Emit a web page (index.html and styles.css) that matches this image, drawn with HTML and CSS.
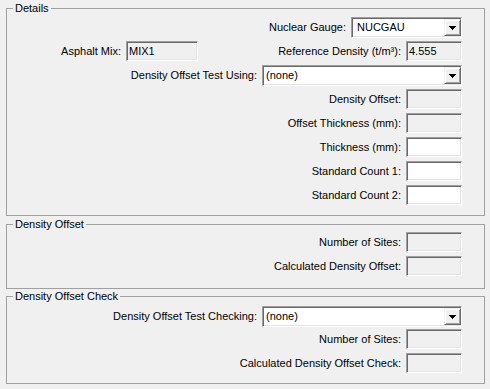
FILE: index.html
```html
<!DOCTYPE html>
<html>
<head>
<meta charset="utf-8">
<link rel="stylesheet" href="styles.css">
</head>
<body>
<fieldset class="group group-details">
  <legend>Details</legend>
  <div class="rows">
    <div class="row">
      <span class="lbl lbl-combo">Nuclear Gauge:</span>
      <div class="combo combo-gauge"><span class="combo-text text-gauge">NUCGAU</span><span class="combo-btn"><svg width="7" height="4" viewBox="0 0 7 4" shape-rendering="crispEdges"><path d="M0 0h7v1h-1v1h-1v1h-1v1h-1v-1h-1v-1h-1v-1h-1z" fill="#000"/></svg></span></div>
    </div>
    <div class="row row-split">
      <div class="sub sub-left">
        <span class="lbl">Asphalt Mix:</span>
        <div class="edit edit-ro edit-mix">MIX1</div>
      </div>
      <div class="sub sub-right">
        <span class="lbl">Reference Density (t/m³):</span>
        <div class="edit edit-ro">4.555</div>
      </div>
    </div>
    <div class="row">
      <span class="lbl lbl-combo">Density Offset Test Using:</span>
      <div class="combo combo-wide"><span class="combo-text">(none)</span><span class="combo-btn"><svg width="7" height="4" viewBox="0 0 7 4" shape-rendering="crispEdges"><path d="M0 0h7v1h-1v1h-1v1h-1v1h-1v-1h-1v-1h-1v-1h-1z" fill="#000"/></svg></span></div>
    </div>
    <div class="row">
      <span class="lbl">Density Offset:</span>
      <div class="edit edit-ro"></div>
    </div>
    <div class="row">
      <span class="lbl">Offset Thickness (mm):</span>
      <div class="edit edit-ro"></div>
    </div>
    <div class="row">
      <span class="lbl">Thickness (mm):</span>
      <div class="edit"></div>
    </div>
    <div class="row">
      <span class="lbl">Standard Count 1:</span>
      <div class="edit"></div>
    </div>
    <div class="row">
      <span class="lbl">Standard Count 2:</span>
      <div class="edit"></div>
    </div>
  </div>
</fieldset>

<fieldset class="group group-offset">
  <legend>Density Offset</legend>
  <div class="rows">
    <div class="row">
      <span class="lbl">Number of Sites:</span>
      <div class="edit edit-ro"></div>
    </div>
    <div class="row">
      <span class="lbl">Calculated Density Offset:</span>
      <div class="edit edit-ro"></div>
    </div>
  </div>
</fieldset>

<fieldset class="group group-check">
  <legend>Density Offset Check</legend>
  <div class="rows">
    <div class="row row-short">
      <span class="lbl lbl-combo">Density Offset Test Checking:</span>
      <div class="combo combo-wide"><span class="combo-text">(none)</span><span class="combo-btn"><svg width="7" height="4" viewBox="0 0 7 4" shape-rendering="crispEdges"><path d="M0 0h7v1h-1v1h-1v1h-1v1h-1v-1h-1v-1h-1v-1h-1z" fill="#000"/></svg></span></div>
    </div>
    <div class="row">
      <span class="lbl">Number of Sites:</span>
      <div class="edit edit-ro"></div>
    </div>
    <div class="row">
      <span class="lbl">Calculated Density Offset Check:</span>
      <div class="edit edit-ro"></div>
    </div>
  </div>
</fieldset>
</body>
</html>
```

FILE: styles.css
```css
html, body {
  margin: 0;
  padding: 0;
}

body {
  background: #f0f0f0;
  font-family: "Liberation Sans", Arial, sans-serif;
  font-size: 11px;
  color: #000;
  width: 490px;
  height: 389px;
  overflow: hidden;
  padding-top: 2px;
  box-sizing: border-box;
}

.group {
  box-sizing: border-box;
  width: 479px;
  min-width: 0;
  margin: 0 5px 0 6px;
  padding: 0;
  border: 1px solid #a0a0a0;
}

.group legend {
  margin-left: 6px;
  padding: 0 2px;
  line-height: 13px;
  height: 13px;
}

.group-details .rows {
  padding: 2px 0 6px 0;
}

.group-offset {
  margin-top: 2px;
}

.group-offset .rows {
  padding: 1px 0 8px 0;
}

.group-check {
  margin-top: 1px;
}

.group-check .rows {
  padding: 3px 0 6px 0;
}

.rows {
  display: flex;
  flex-direction: column;
}

.row {
  display: flex;
  justify-content: flex-end;
  align-items: flex-start;
  gap: 5px;
  height: 24px;
  padding-right: 22px;
}

.row-short {
  height: 23px;
}

.row-split {
  justify-content: space-between;
}

.sub {
  display: flex;
  align-items: flex-start;
  gap: 5px;
}

.sub-left {
  width: 191px;
  justify-content: flex-end;
}

.lbl {
  display: block;
  height: 20px;
  line-height: 20px;
  white-space: nowrap;
}

.lbl-combo {
  height: 21px;
  line-height: 21px;
}

.edit {
  box-sizing: border-box;
  width: 56px;
  height: 20px;
  background: #fff;
  border-style: solid;
  border-width: 1px;
  border-color: #a0a0a0 #fff #fff #a0a0a0;
  box-shadow: inset 1px 1px 0 #696969, inset -1px -1px 0 #e3e3e3;
  padding-left: 2px;
  line-height: 18px;
  white-space: nowrap;
  overflow: hidden;
}

.edit-ro {
  background: #f0f0f0;
}

.edit-mix {
  width: 72px;
}

.combo {
  box-sizing: border-box;
  height: 21px;
  background: #fff;
  border-style: solid;
  border-width: 1px;
  border-color: #a0a0a0 #fff #fff #a0a0a0;
  box-shadow: inset 1px 1px 0 #696969, inset -1px -1px 0 #e3e3e3;
  display: flex;
  align-items: center;
  padding: 1px 0 1px 1px;
}

.combo-gauge {
  width: 111px;
}

.combo-wide {
  width: 200px;
}

.combo-text {
  flex: 1;
  padding-left: 2px;
  line-height: 17px;
  white-space: nowrap;
  overflow: hidden;
}

.text-gauge {
  padding-left: 4px;
}

.combo-btn {
  box-sizing: border-box;
  width: 17px;
  height: 17px;
  background: #f0f0f0;
  border-style: solid;
  border-width: 1px;
  border-color: #f0f0f0 #696969 #696969 #f0f0f0;
  box-shadow: inset 1px 1px 0 #fff, inset -1px -1px 0 #a0a0a0;
  display: flex;
  align-items: center;
  justify-content: center;
}

.combo-btn svg {
  display: block;
  margin-top: 1px;
}
```
